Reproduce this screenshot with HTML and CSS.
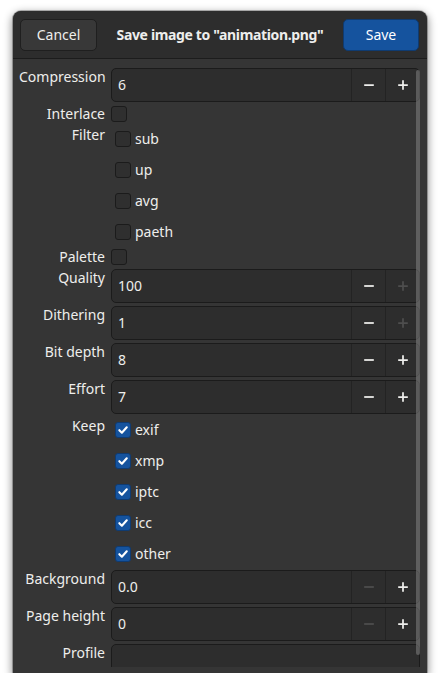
FILE: index.html
```html
<!DOCTYPE html>
<html lang="en">
<head>
<meta charset="utf-8">
<title>Save image</title>
<link rel="stylesheet" href="styles.css">
</head>
<body>
<div class="dialog">
  <header class="headerbar">
    <button class="btn">Cancel</button>
    <div class="title">Save image to "animation.png"</div>
    <button class="btn suggested">Save</button>
  </header>

  <div class="scroller">
    <div class="form">
      <div class="label">Compression</div>
      <div class="spin">
        <span class="spin-text">6</span>
        <span class="spin-btn"><svg viewBox="0 0 16 16"><path d="M2.5 8h11"/></svg></span>
        <span class="spin-btn"><svg viewBox="0 0 16 16"><path d="M2.5 8h11M8 2.5v11"/></svg></span>
      </div>

      <div class="label">Interlace</div>
      <div class="check-row"><span class="box"></span></div>

      <div class="label">Filter</div>
      <div class="check-group">
        <label class="check"><span class="box"></span>sub</label>
        <label class="check"><span class="box"></span>up</label>
        <label class="check"><span class="box"></span>avg</label>
        <label class="check"><span class="box"></span>paeth</label>
      </div>

      <div class="label">Palette</div>
      <div class="check-row"><span class="box"></span></div>

      <div class="label">Quality</div>
      <div class="spin">
        <span class="spin-text">100</span>
        <span class="spin-btn"><svg viewBox="0 0 16 16"><path d="M2.5 8h11"/></svg></span>
        <span class="spin-btn disabled"><svg viewBox="0 0 16 16"><path d="M2.5 8h11M8 2.5v11"/></svg></span>
      </div>

      <div class="label">Dithering</div>
      <div class="spin">
        <span class="spin-text">1</span>
        <span class="spin-btn"><svg viewBox="0 0 16 16"><path d="M2.5 8h11"/></svg></span>
        <span class="spin-btn disabled"><svg viewBox="0 0 16 16"><path d="M2.5 8h11M8 2.5v11"/></svg></span>
      </div>

      <div class="label">Bit depth</div>
      <div class="spin">
        <span class="spin-text">8</span>
        <span class="spin-btn"><svg viewBox="0 0 16 16"><path d="M2.5 8h11"/></svg></span>
        <span class="spin-btn"><svg viewBox="0 0 16 16"><path d="M2.5 8h11M8 2.5v11"/></svg></span>
      </div>

      <div class="label">Effort</div>
      <div class="spin">
        <span class="spin-text">7</span>
        <span class="spin-btn"><svg viewBox="0 0 16 16"><path d="M2.5 8h11"/></svg></span>
        <span class="spin-btn"><svg viewBox="0 0 16 16"><path d="M2.5 8h11M8 2.5v11"/></svg></span>
      </div>

      <div class="label">Keep</div>
      <div class="check-group">
        <label class="check"><span class="box checked"><svg viewBox="0 0 16 16"><path d="M3.8 8.2l2.9 2.9 5.6-6.2"/></svg></span>exif</label>
        <label class="check"><span class="box checked"><svg viewBox="0 0 16 16"><path d="M3.8 8.2l2.9 2.9 5.6-6.2"/></svg></span>xmp</label>
        <label class="check"><span class="box checked"><svg viewBox="0 0 16 16"><path d="M3.8 8.2l2.9 2.9 5.6-6.2"/></svg></span>iptc</label>
        <label class="check"><span class="box checked"><svg viewBox="0 0 16 16"><path d="M3.8 8.2l2.9 2.9 5.6-6.2"/></svg></span>icc</label>
        <label class="check"><span class="box checked"><svg viewBox="0 0 16 16"><path d="M3.8 8.2l2.9 2.9 5.6-6.2"/></svg></span>other</label>
      </div>

      <div class="label">Background</div>
      <div class="spin">
        <span class="spin-text">0.0</span>
        <span class="spin-btn disabled"><svg viewBox="0 0 16 16"><path d="M2.5 8h11"/></svg></span>
        <span class="spin-btn"><svg viewBox="0 0 16 16"><path d="M2.5 8h11M8 2.5v11"/></svg></span>
      </div>

      <div class="label">Page height</div>
      <div class="spin">
        <span class="spin-text">0</span>
        <span class="spin-btn disabled"><svg viewBox="0 0 16 16"><path d="M2.5 8h11"/></svg></span>
        <span class="spin-btn"><svg viewBox="0 0 16 16"><path d="M2.5 8h11M8 2.5v11"/></svg></span>
      </div>

      <div class="label">Profile</div>
      <div class="spin"><span class="spin-text"></span></div>
    </div>
    <div class="scrollbar"></div>
  </div>
</div>
</body>
</html>
```

FILE: styles.css
```css
* {
  box-sizing: border-box;
}

html, body {
  margin: 0;
  padding: 0;
  background: #ffffff;
}

body {
  font-family: "Noto Sans", "DejaVu Sans", sans-serif;
  font-size: 14px;
  color: #eeeeec;
}

.dialog {
  margin: 11px 0 0 13px;
  width: 414px;
  height: 662px;
  background: #353535;
  border-radius: 8px 8px 0 0;
  box-shadow: 0 0 0 1px rgba(0, 0, 0, 0.25), 0 3px 9px 1px rgba(0, 0, 0, 0.45);
  display: flex;
  flex-direction: column;
  padding-bottom: 6px;
  overflow: hidden;
}

/* ---- header bar ---- */
.headerbar {
  height: 48px;
  flex: none;
  background: #2d2d2d;
  border-bottom: 1px solid #1c1c1c;
  border-radius: 8px 8px 0 0;
  display: flex;
  align-items: center;
  justify-content: space-between;
  padding: 0 8px 0 7px;
}

.btn {
  font: inherit;
  color: #eeeeec;
  height: 32px;
  width: 77px;
  border-radius: 5px;
  border: 1px solid #1f1f1f;
  background: #383838;
  padding: 0;
}

.btn.suggested {
  width: 76px;
  background: #15539e;
  border-color: #0f3b71;
  color: #ffffff;
}

.title {
  font-weight: bold;
  font-size: 14px;
  letter-spacing: -0.35px;
}

/* ---- scrolled form ---- */
.scroller {
  position: relative;
  flex: 1;
  overflow: hidden;
}

.form {
  display: grid;
  grid-template-columns: 86px 1fr;
  column-gap: 6px;
  row-gap: 3px;
  padding: 9px 7px 0 6px;
}

.label {
  text-align: right;
  line-height: 18px;
  align-self: start;
  white-space: nowrap;
}

.spin {
  height: 34px;
  display: flex;
  background: #2d2d2d;
  border: 1px solid #1b1b1b;
  border-radius: 5px;
}

.spin-text {
  flex: 1;
  display: flex;
  align-items: center;
  padding-left: 6px;
  line-height: 18px;
}

.spin-btn {
  width: 34px;
  flex: none;
  border-left: 1px solid #232323;
  display: flex;
  align-items: center;
  justify-content: center;
}

.spin-btn svg {
  width: 14px;
  height: 14px;
  fill: none;
  stroke: #eeeeec;
  stroke-width: 2;
}

.spin-btn.disabled svg {
  stroke: #4e4e4e;
}

/* ---- check buttons ---- */
.check-row {
  height: 18px;
  display: flex;
  align-items: center;
}

.check-group {
  display: flex;
  flex-direction: column;
  gap: 15px;
  padding: 5px 0 5px 4px;
}

.check {
  height: 16px;
  display: flex;
  align-items: center;
  gap: 4px;
  line-height: 18px;
}

.box {
  width: 16px;
  height: 16px;
  flex: none;
  border: 1px solid #1b1b1b;
  border-radius: 3px;
  background: #2f2f2f;
  display: flex;
  align-items: center;
  justify-content: center;
}

.box.checked {
  background: #15539e;
  border-color: #0f3b71;
}

.box svg {
  width: 14px;
  height: 14px;
  fill: none;
  stroke: #ffffff;
  stroke-width: 2.4;
  stroke-linecap: round;
  stroke-linejoin: round;
}

/* overlay scrollbar slider */
.scrollbar {
  position: absolute;
  top: 11px;
  right: 7px;
  width: 4px;
  height: 585px;
  border-radius: 2px;
  background: rgba(130, 130, 130, 0.55);
}
```
